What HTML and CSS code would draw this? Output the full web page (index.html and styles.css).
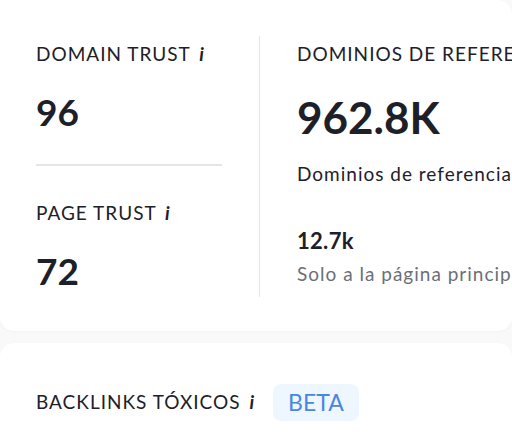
FILE: index.html
```html
<!DOCTYPE html>
<html lang="es">
<head>
    <meta charset="UTF-8">
    <meta name="viewport" content="width=device-width, initial-scale=1.0">
    <title>Backlinks</title>
    <link rel="stylesheet" href="styles.css">
</head>
<body>

<div class="card stats">
    <div class="col trust">
        <div class="label">Domain Trust <span class="info">i</span></div>
        <div class="value">96</div>
        <hr class="sep">
        <div class="label">Page Trust <span class="info">i</span></div>
        <div class="value">72</div>
    </div>
    <div class="col domains">
        <div class="label">Dominios de referencia</div>
        <div class="big">962.8K</div>
        <div class="desc">Dominios de referencia</div>
        <div class="sub">12.7k</div>
        <div class="muted">Solo a la página principal</div>
    </div>
</div>

<div class="card toxic">
    <div class="label">Backlinks tóxicos <span class="info">i</span></div>
    <span class="badge">BETA</span>
</div>

</body>
</html>
```

FILE: styles.css
```css
body {
    margin: 0;
    font-family: Lato, "Noto Sans", sans-serif;
    color: #1d2029;
    background: #f9f9fa;
    overflow: hidden;
    white-space: nowrap;
}
.card {
    background: #fff;
    border-radius: 0 14px 14px 14px;
    box-shadow: 0 1px 3px rgba(0, 0, 0, 0.03);
}
.stats {
    display: flex;
    height: 331px;
    padding: 36px 0 0 36px;
    box-sizing: border-box;
}
.col {
    padding-top: 6px;
    box-sizing: border-box;
}
.col.trust {
    flex-shrink: 0;
    width: 224px;
    height: 261px;
    padding-right: 37px;
    border-right: 1px solid #e4e5e7;
}
.col.domains {
    min-width: 0;
    padding-left: 37px;
}
.label {
    font-size: 19px;
    line-height: 24px;
    text-transform: uppercase;
    letter-spacing: 1px;
}
.info {
    font-style: italic;
    font-weight: 700;
    text-transform: none;
    margin-left: 3px;
}
.value {
    font-size: 37px;
    font-weight: 700;
    line-height: 44px;
    margin-top: 24px;
}
.sep {
    border: 0;
    border-top: 2px solid #e4e5e7;
    margin: 30px 0 35px;
}
.big {
    font-size: 44px;
    font-weight: 700;
    line-height: 52px;
    margin-top: 25px;
}
.desc {
    font-size: 19px;
    line-height: 24px;
    letter-spacing: 1px;
    margin-top: 19px;
}
.sub {
    font-size: 22px;
    font-weight: 700;
    line-height: 28px;
    letter-spacing: 0.3px;
    margin-top: 41px;
}
.muted {
    font-size: 19px;
    line-height: 24px;
    letter-spacing: 1px;
    color: #6c6f78;
    margin-top: 7px;
}
.toxic {
    margin-top: 12px;
    height: 120px;
    padding: 41px 36px 0;
    box-sizing: border-box;
    display: flex;
    align-items: flex-start;
    gap: 18px;
    border-radius: 14px;
}
.toxic .label {
    margin-top: 6px;
}
.badge {
    background: #eef6ff;
    color: #4a86e0;
    font-size: 23px;
    line-height: 37px;
    padding: 0 15px;
    border-radius: 8px;
}
```
